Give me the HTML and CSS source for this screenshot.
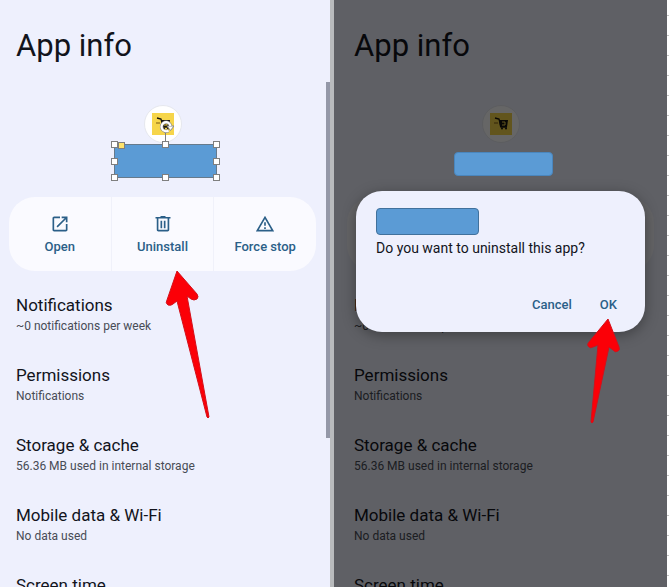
FILE: index.html
```
<!DOCTYPE html>
<html lang="en">

<head>
    <meta charset="UTF-8" />
    <meta name="viewport" content="width=device-width, initial-scale=1.0" />
    <title>App info</title>
    <link rel="stylesheet" href="styles.css">
</head>

<body>
    <!-- shared icons -->
    <svg class="sprite" aria-hidden="true">
        <symbol id="icon-open" viewBox="0 0 24 24">
            <path d="M19 19H5V5h7V3H5c-1.1 0-2 .9-2 2v14c0 1.1.9 2 2 2h14c1.1 0 2-.9 2-2v-7h-2v7zM14 3v2h3.6l-9.8 9.8 1.4 1.4L19 6.4V10h2V3h-7z" />
        </symbol>
        <symbol id="icon-trash" viewBox="0 0 24 24">
            <path d="M15 3.500V2.500H9v1H3v2h1.500V19c0 1.100.9 2 2 2h11c1.100 0 2-.9 2-2V5.500H21v-2h-6zM17.500 19h-11V5.500h11V19zM9 8h2v9H9zM13 8h2v9h-2z" />
        </symbol>
        <symbol id="icon-warning" viewBox="0 0 24 24">
            <path d="M12 6l7.500 13h-15L12 6m0-4L1 21h22L12 2zM11 16h2v2h-2zM11 10h2v4h-2z" />
        </symbol>
        <symbol id="icon-cart" viewBox="0 0 22 22">
            <rect width="22" height="22" fill="#f6d54a" />
            <path d="M5 5l4 1 2 8h6" fill="none" stroke="#17150e" stroke-width="1.300" />
            <path d="M9 7h9l-1 7h-7z" fill="#17150e" />
            <path d="M4 10h4" stroke="#7a5a14" />
            <path d="M12 9h3v3h-3" fill="none" stroke="#f6d54a" />
            <circle cx="12" cy="15.500" r="1" fill="#17150e" />
            <circle cx="16" cy="15.500" r="1" fill="#17150e" />
        </symbol>
    </svg>

    <div class="screens">
        <section class="phone">
            <h1>App info</h1>
            <div class="app-icon"><svg><use href="#icon-cart" /></svg></div>
            <div class="app-name">
                <div class="mask selected">
                    <span class="stem"></span>
                    <svg class="rotate" viewBox="0 0 16 16">
                        <path d="M10.500 11.500a4.500 4.500 0 1 1 2-4.500" fill="none" stroke="#8b8b8b" stroke-width="3.400" />
                        <path d="M9 7h7l-3.500 4.500z" fill="#fff" stroke="#8b8b8b" />
                        <path d="M10.500 11.500a4.500 4.500 0 1 1 2-4.500" fill="none" stroke="#fff" stroke-width="2.200" />
                    </svg>
                    <span class="handle top left"></span>
                    <span class="handle top center"></span>
                    <span class="handle top right"></span>
                    <span class="handle middle left"></span>
                    <span class="handle middle right"></span>
                    <span class="handle bottom left"></span>
                    <span class="handle bottom center"></span>
                    <span class="handle bottom right"></span>
                    <span class="handle adjust"></span>
                </div>
            </div>
            <div class="actions">
                <button><svg><use href="#icon-open" /></svg>Open</button>
                <button><svg><use href="#icon-trash" /></svg>Uninstall</button>
                <button><svg><use href="#icon-warning" /></svg>Force stop</button>
            </div>
            <ul class="settings">
                <li><h2>Notifications</h2><p>~0 notifications per week</p></li>
                <li><h2>Permissions</h2><p>Notifications</p></li>
                <li><h2>Storage &amp; cache</h2><p>56.36 MB used in internal storage</p></li>
                <li><h2>Mobile data &amp; Wi-Fi</h2><p>No data used</p></li>
                <li><h2>Screen time</h2></li>
            </ul>
            <div class="scrollbar"></div>
            <svg class="arrow arrow-uninstall" viewBox="0 0 46 150">
                <path d="M12 1L32 24Q34 27 32 29Q29 31 26 29L22 26L44 147Q43 149 42 147L12 31L8 34Q6 36 3 35Q0 33 2 30Z" />
            </svg>
        </section>

        <section class="phone dimmed">
            <h1>App info</h1>
            <div class="app-icon"><svg><use href="#icon-cart" /></svg></div>
            <div class="app-name">
                <div class="mask small"></div>
            </div>
            <div class="actions">
                <button disabled><svg><use href="#icon-open" /></svg>Open</button>
                <button disabled><svg><use href="#icon-trash" /></svg>Uninstall</button>
                <button disabled><svg><use href="#icon-warning" /></svg>Force stop</button>
            </div>
            <ul class="settings">
                <li><h2>Notifications</h2><p>~0 notifications per week</p></li>
                <li><h2>Permissions</h2><p>Notifications</p></li>
                <li><h2>Storage &amp; cache</h2><p>56.36 MB used in internal storage</p></li>
                <li><h2>Mobile data &amp; Wi-Fi</h2><p>No data used</p></li>
                <li><h2>Screen time</h2></li>
            </ul>
            <div class="scrim"></div>
            <div class="dialog" role="dialog" aria-label="Uninstall app">
                <div class="mask"></div>
                <p>Do you want to uninstall this app?</p>
                <div class="dialog-buttons">
                    <button>Cancel</button>
                    <button>OK</button>
                </div>
            </div>
            <svg class="arrow arrow-ok" viewBox="0 0 36 108">
                <path d="M21 1L32 29Q33 32 31 33Q28 35 26 32L22 29L6 104Q5 106 4 104L11 27L6 29Q3 31 1 28Q0 26 2 24Z" />
            </svg>
        </section>
        <div class="ruler"></div>
    </div>
</body>

</html>
```

FILE: styles.css
```
* {
    box-sizing: border-box;
}

body {
    margin: 0;
    font-family: Roboto, "Open Sans", sans-serif;
    color: #12141c;
    background: #fff;
}

h1,
h2,
p,
ul {
    margin: 0;
    padding: 0;
    font-weight: normal;
}

.sprite {
    position: absolute;
    width: 0;
    height: 0;
}

.screens {
    display: flex;
    height: 100vh;
    overflow: hidden;
}

.phone {
    position: relative;
    flex: 1;
    padding-right: 5px;
    overflow: hidden;
    background: #eef0fd;
}

.phone.dimmed {
    padding: 0 4px;
    border-left: 4px solid #b9bbbd;
    box-sizing: content-box;
}

h1 {
    padding: 26px 16px 39px;
    font-size: 31px;
    line-height: 40px;
}

.app-icon {
    display: flex;
    align-items: center;
    justify-content: center;
    width: 38px;
    height: 38px;
    margin: 0 auto;
    border: 1px solid #e6e8ee;
    border-radius: 50%;
    background: #fff;
}

.app-icon svg {
    width: 22px;
    height: 22px;
}

.app-name {
    display: flex;
    justify-content: center;
    height: 54px;
    padding: 1px 0 0 6px;
}

.mask {
    position: relative;
    width: 103px;
    height: 27px;
    border: 1px solid #41719c;
    border-radius: 4px;
    background: #5b9bd5;
}

.mask.selected {
    height: 34px;
    border-color: #667a8c;
    border-radius: 0;
}

.mask.small {
    z-index: 2;
    width: 99px;
    height: 24px;
    margin-top: 8px;
    border-color: #4a86bd;
}

.handle {
    position: absolute;
    width: 7px;
    height: 7px;
    border: 1px solid #7f7f7f;
    background: #fff;
}

.handle.top { top: -4px; }
.handle.middle { top: 13px; }
.handle.bottom { bottom: -4px; }
.handle.left { left: -4px; }
.handle.center { left: 47px; }
.handle.right { right: -4px; }

.handle.adjust {
    top: -3px;
    left: 3px;
    background: #ffe36b;
}

.stem {
    position: absolute;
    top: -14px;
    left: 50px;
    height: 14px;
    border-left: 1px solid #7f7f7f;
}

.rotate {
    position: absolute;
    top: -26px;
    left: 43px;
    width: 16px;
    height: 16px;
}

.actions {
    display: flex;
    gap: 1px;
    margin: 0 9px;
    border-radius: 26px;
    overflow: hidden;
    background: #f0f1fa;
}

.actions button {
    display: flex;
    flex: 1;
    flex-direction: column;
    align-items: center;
    gap: 4px;
    height: 74px;
    padding: 17px 0 0;
    border: 0;
    font: 500 13px/18px Roboto, "Open Sans", sans-serif;
    color: #2b5f88;
    background: #fafaff;
}

.actions svg {
    width: 20px;
    height: 20px;
    fill: #2b5f88;
}

.settings {
    padding: 22px 16px 0;
    list-style: none;
}

.settings li {
    padding-bottom: 28px;
}

.settings h2 {
    font-size: 17px;
    line-height: 24px;
}

.settings p {
    font-size: 12px;
    line-height: 18px;
    color: #484c55;
}

.scrollbar {
    position: absolute;
    top: 82px;
    right: 0;
    width: 4px;
    height: 356px;
    background: #9498a8;
}

.scrim {
    position: absolute;
    inset: 0;
    background: rgba(0, 0, 0, 0.6);
}

.dialog {
    position: absolute;
    top: 191px;
    left: 22px;
    right: 22px;
    z-index: 3;
    padding: 17px 20px;
    border-radius: 26px;
    background: #eef0fd;
    box-shadow: 0 3px 14px rgba(0, 0, 0, 0.35);
}

.dialog p {
    padding-top: 4px;
    font-size: 14px;
    line-height: 18px;
}

.dialog-buttons {
    display: flex;
    justify-content: flex-end;
    gap: 28px;
    padding: 38px 8px 0 0;
}

.dialog-buttons button {
    padding: 0;
    border: 0;
    font: 500 13px/20px Roboto, "Open Sans", sans-serif;
    color: #2b5f88;
    background: none;
}

.arrow {
    position: absolute;
    z-index: 4;
    fill: #fb0007;
    stroke: #d4101a;
    stroke-width: 1;
}

.arrow-uninstall {
    top: 270px;
    left: 165px;
    width: 46px;
    height: 150px;
}

.arrow-ok {
    top: 318px;
    left: 253px;
    width: 36px;
    height: 108px;
}

/* tick marks down the outer edge */
.ruler {
    width: 2px;
    background: repeating-linear-gradient(#fff 0 15px, #c4c4c4 15px 16px, #fff 16px 20px);
}
```
